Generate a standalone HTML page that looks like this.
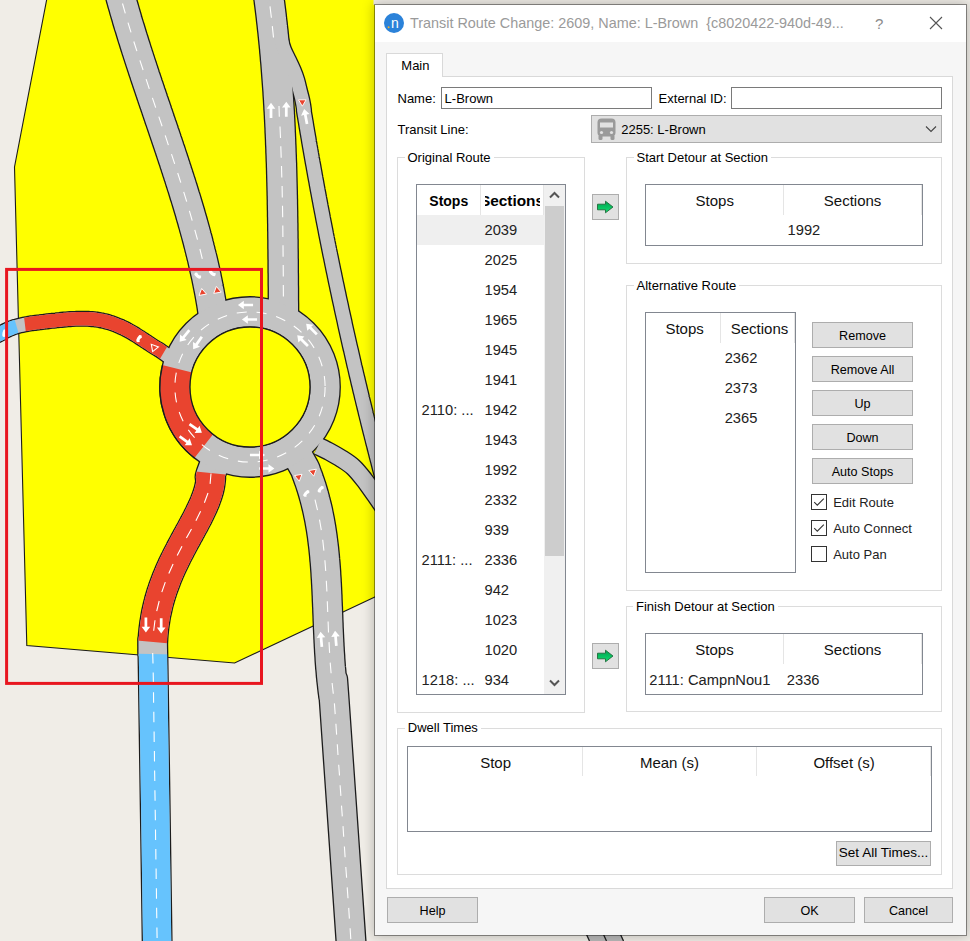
<!DOCTYPE html>
<html><head><meta charset="utf-8">
<style>
*{margin:0;padding:0;box-sizing:border-box}
html,body{width:970px;height:941px;overflow:hidden;background:#f0ede7;font-family:"Liberation Sans",sans-serif}
.a{position:absolute}
.t{position:absolute;white-space:nowrap;color:#000}
.tb{position:absolute;white-space:nowrap;background:#fff;padding:0 3px}
</style></head><body>
<svg class="a" style="left:0;top:0" width="970" height="941" viewBox="0 0 970 941">
<rect width="970" height="941" fill="#f0ede7"/>
<polygon points="46.8,-1 373.5,-1 373.5,5 420,5 420,575.7 234.6,663 26.8,645.6 14.5,167" fill="#ffff00"/>
<polyline points="46.8,-1 14.5,167 26.8,645.6 234.6,663 420,575.7" fill="none" stroke="#1c1c1c" stroke-width="1.1"/>
<g fill="none" stroke-linecap="butt" stroke-linejoin="round">
<path d="M116.2,-20.0 C116.4,-19.3 116.9,-17.3 117.2,-16.0 C117.6,-14.7 117.9,-13.3 118.3,-12.0 C118.6,-10.7 119.0,-9.3 119.3,-8.0 C119.7,-6.7 120.0,-5.3 120.4,-4.0 C120.8,-2.7 121.1,-1.3 121.5,0.0 C121.9,1.3 122.2,2.7 122.6,4.0 C123.0,5.3 123.4,6.7 123.8,8.0 C124.1,9.3 124.5,10.7 124.9,12.0 C125.3,13.3 125.7,14.7 126.1,16.0 C126.5,17.3 126.9,18.7 127.2,20.0 C127.6,21.3 128.0,22.7 128.4,24.0 C128.8,25.3 129.2,26.7 129.7,28.0 C130.1,29.3 130.5,30.7 130.9,32.0 C131.3,33.3 131.7,34.7 132.1,36.0 C132.5,37.3 132.9,38.7 133.4,40.0 C133.8,41.3 134.2,42.7 134.6,44.0 C135.0,45.3 135.5,46.7 135.9,48.0 C136.3,49.3 136.7,50.7 137.2,52.0 C137.6,53.3 138.0,54.7 138.5,56.0 C138.9,57.3 139.3,58.7 139.8,60.0 C140.2,61.3 140.6,62.7 141.1,64.0 C141.5,65.3 142.0,66.7 142.4,68.0 C142.8,69.3 143.3,70.7 143.7,72.0 C144.2,73.3 144.6,74.7 145.0,76.0 C145.5,77.3 145.9,78.7 146.4,80.0 C146.8,81.3 147.3,82.7 147.7,84.0 C148.2,85.3 148.6,86.7 149.1,88.0 C149.5,89.3 150.0,90.7 150.4,92.0 C150.9,93.3 151.3,94.7 151.8,96.0 C152.2,97.3 152.7,98.7 153.1,100.0 C153.6,101.3 154.0,102.7 154.5,104.0 C155.0,105.3 155.4,106.7 155.9,108.0 C156.3,109.3 156.8,110.7 157.2,112.0 C157.7,113.3 158.1,114.7 158.6,116.0 C159.0,117.3 159.5,118.7 159.9,120.0 C160.4,121.3 160.9,122.7 161.3,124.0 C161.8,125.3 162.2,126.7 162.7,128.0 C163.1,129.3 163.6,130.7 164.0,132.0 C164.5,133.3 164.9,134.7 165.4,136.0 C165.8,137.3 166.3,138.7 166.7,140.0 C167.2,141.3 167.6,142.7 168.1,144.0 C168.5,145.3 169.0,146.7 169.4,148.0 C169.9,149.3 170.3,150.7 170.8,152.0 C171.2,153.3 171.6,154.7 172.1,156.0 C172.5,157.3 173.0,158.7 173.4,160.0 C173.9,161.3 174.3,162.7 174.7,164.0 C175.2,165.3 175.6,166.7 176.0,168.0 C176.5,169.3 176.9,170.7 177.3,172.0 C177.8,173.3 178.2,174.7 178.6,176.0 C179.1,177.3 179.5,178.7 179.9,180.0 C180.3,181.3 180.8,182.7 181.2,184.0 C181.6,185.3 182.0,186.7 182.5,188.0 C182.9,189.3 183.3,190.7 183.7,192.0 C184.1,193.3 184.5,194.7 184.9,196.0 C185.4,197.3 185.8,198.7 186.2,200.0 C186.6,201.3 187.0,202.7 187.4,204.0 C187.8,205.3 188.2,206.7 188.6,208.0 C189.0,209.3 189.4,210.7 189.8,212.0 C190.2,213.3 190.5,214.7 190.9,216.0 C191.3,217.3 191.7,218.7 192.1,220.0 C192.5,221.3 192.8,222.7 193.2,224.0 C193.6,225.3 194.0,226.7 194.3,228.0 C194.7,229.3 195.1,230.7 195.4,232.0 C195.8,233.3 196.2,234.7 196.5,236.0 C196.9,237.3 197.2,238.7 197.6,240.0 C197.9,241.3 198.3,242.7 198.6,244.0 C199.0,245.3 199.3,246.7 199.6,248.0 C200.0,249.3 200.3,250.7 200.6,252.0 C201.0,253.3 201.3,254.7 201.6,256.0 C202.0,257.3 202.3,258.7 202.6,260.0 C202.9,261.3 203.2,262.7 203.5,264.0 C203.8,265.3 204.1,266.7 204.4,268.0 C204.7,269.3 205.0,270.7 205.3,272.0 C205.6,273.3 205.9,274.7 206.2,276.0 C206.5,277.3 206.7,278.7 207.0,280.0 C207.3,281.3 207.6,282.7 207.8,284.0 C208.1,285.3 208.4,286.7 208.6,288.0 C208.9,289.3 209.1,290.7 209.4,292.0 C209.6,293.3 209.9,294.7 210.1,296.0 C210.3,297.3 210.6,298.7 210.8,300.0 C211.0,301.3 211.3,302.7 211.5,304.0 C211.7,305.3 211.9,306.7 212.1,308.0 C212.3,309.3 212.5,310.7 212.7,312.0 C212.9,313.3 213.1,314.7 213.3,316.0 C213.5,317.3 213.8,319.3 213.9,320.0" stroke="#1c1c1c" stroke-width="31.1"/>
<path d="M266.4,-20.0 C266.5,-19.3 266.8,-17.3 267.0,-16.0 C267.2,-14.7 267.3,-13.3 267.5,-12.0 C267.7,-10.7 267.9,-9.3 268.1,-8.0 C268.3,-6.7 268.5,-5.3 268.6,-4.0 C268.8,-2.7 269.0,-1.3 269.2,0.0 C269.3,1.3 269.5,2.7 269.7,4.0 C269.9,5.3 270.0,6.7 270.2,8.0 C270.4,9.3 270.5,10.7 270.7,12.0 C270.9,13.3 271.0,14.7 271.2,16.0 C271.3,17.3 271.5,18.7 271.6,20.0 C271.8,21.3 271.9,22.7 272.1,24.0 C272.2,25.3 272.4,26.7 272.5,28.0 C272.7,29.3 272.8,30.7 273.0,32.0 C273.1,33.3 273.2,34.7 273.4,36.0 C273.5,37.3 273.6,38.7 273.8,40.0 C273.9,41.3 274.0,42.7 274.2,44.0 C274.3,45.3 274.4,46.7 274.6,48.0 C274.7,49.3 274.8,50.7 274.9,52.0 C275.1,53.3 275.2,54.7 275.3,56.0 C275.4,57.3 275.5,58.7 275.6,60.0 C275.8,61.3 275.9,62.7 276.0,64.0 C276.1,65.3 276.2,66.7 276.3,68.0 C276.4,69.3 276.5,70.7 276.6,72.0 C276.7,73.3 276.8,74.7 276.9,76.0 C277.0,77.3 277.1,78.7 277.2,80.0 C277.3,81.3 277.4,82.7 277.5,84.0 C277.6,85.3 277.7,86.7 277.8,88.0 C277.9,89.3 278.0,90.7 278.1,92.0 C278.1,93.3 278.2,94.7 278.3,96.0 C278.4,97.3 278.5,98.7 278.6,100.0 C278.6,101.3 278.7,102.7 278.8,104.0 C278.9,105.3 279.0,106.7 279.0,108.0 C279.1,109.3 279.2,110.7 279.3,112.0 C279.3,113.3 279.4,114.7 279.5,116.0 C279.5,117.3 279.6,118.7 279.7,120.0 C279.7,121.3 279.8,122.7 279.9,124.0 C279.9,125.3 280.0,126.7 280.1,128.0 C280.1,129.3 280.2,130.7 280.2,132.0 C280.3,133.3 280.4,134.7 280.4,136.0 C280.5,137.3 280.5,138.7 280.6,140.0 C280.6,141.3 280.7,142.7 280.7,144.0 C280.8,145.3 280.9,146.7 280.9,148.0 C281.0,149.3 281.0,150.7 281.0,152.0 C281.1,153.3 281.1,154.7 281.2,156.0 C281.2,157.3 281.3,158.7 281.3,160.0 C281.4,161.3 281.4,162.7 281.5,164.0 C281.5,165.3 281.5,166.7 281.6,168.0 C281.6,169.3 281.7,170.7 281.7,172.0 C281.7,173.3 281.8,174.7 281.8,176.0 C281.8,177.3 281.9,178.7 281.9,180.0 C281.9,181.3 282.0,182.7 282.0,184.0 C282.0,185.3 282.1,186.7 282.1,188.0 C282.1,189.3 282.2,190.7 282.2,192.0 C282.2,193.3 282.2,194.7 282.3,196.0 C282.3,197.3 282.3,198.7 282.4,200.0 C282.4,201.3 282.4,202.7 282.4,204.0 C282.5,205.3 282.5,206.7 282.5,208.0 C282.5,209.3 282.6,210.7 282.6,212.0 C282.6,213.3 282.6,214.7 282.6,216.0 C282.7,217.3 282.7,218.7 282.7,220.0 C282.7,221.3 282.7,222.7 282.8,224.0 C282.8,225.3 282.8,226.7 282.8,228.0 C282.8,229.3 282.8,230.7 282.9,232.0 C282.9,233.3 282.9,234.7 282.9,236.0 C282.9,237.3 282.9,238.7 283.0,240.0 C283.0,241.3 283.0,242.7 283.0,244.0 C283.0,245.3 283.0,246.7 283.0,248.0 C283.1,249.3 283.1,250.7 283.1,252.0 C283.1,253.3 283.1,254.7 283.1,256.0 C283.1,257.3 283.1,258.7 283.2,260.0 C283.2,261.3 283.2,262.7 283.2,264.0 C283.2,265.3 283.2,266.7 283.2,268.0 C283.2,269.3 283.2,270.7 283.2,272.0 C283.3,273.3 283.3,274.7 283.3,276.0 C283.3,277.3 283.3,278.7 283.3,280.0 C283.3,281.3 283.3,282.7 283.3,284.0 C283.3,285.3 283.4,286.7 283.4,288.0 C283.4,289.3 283.4,290.7 283.4,292.0 C283.4,293.3 283.4,294.7 283.4,296.0 C283.4,297.3 283.4,298.7 283.4,300.0 C283.5,301.3 283.5,302.7 283.5,304.0 C283.5,305.3 283.5,306.7 283.5,308.0 C283.5,309.3 283.5,310.7 283.5,312.0 C283.5,313.3 283.6,314.7 283.6,316.0 C283.6,317.3 283.6,319.3 283.6,320.0" stroke="#1c1c1c" stroke-width="31.6"/>
<path d="M274.0,0.0 C274.5,3.3 276.1,15.0 277.0,20.0 C277.9,25.0 278.8,26.7 279.5,30.0 C280.2,33.3 280.4,36.7 281.2,40.0 C282.0,43.3 282.9,46.7 284.2,50.0 C285.5,53.3 287.4,56.7 289.0,60.0 C290.6,63.3 292.2,66.7 293.6,70.0 C295.0,73.3 296.3,76.7 297.3,80.0 C298.3,83.3 299.0,86.7 299.8,90.0 C300.6,93.3 301.6,96.7 302.3,100.0 C303.0,103.3 303.8,108.3 304.0,110.0 C304.2,111.7 303.7,109.3 303.8,110.0 C303.8,110.7 304.2,112.7 304.4,114.0 C304.6,115.3 304.9,116.7 305.1,118.0 C305.3,119.3 305.5,120.7 305.8,122.0 C306.0,123.3 306.2,124.7 306.4,126.0 C306.6,127.3 306.9,128.7 307.1,130.0 C307.3,131.3 307.5,132.7 307.8,134.0 C308.0,135.3 308.2,136.7 308.5,138.0 C308.7,139.3 308.9,140.7 309.1,142.0 C309.4,143.3 309.6,144.7 309.8,146.0 C310.1,147.3 310.3,148.7 310.5,150.0 C310.8,151.3 311.0,152.7 311.2,154.0 C311.5,155.3 311.7,156.7 311.9,158.0 C312.2,159.3 312.4,160.7 312.6,162.0 C312.9,163.3 313.1,164.7 313.4,166.0 C313.6,167.3 313.8,168.7 314.1,170.0 C314.3,171.3 314.6,172.7 314.8,174.0 C315.0,175.3 315.3,176.7 315.5,178.0 C315.8,179.3 316.0,180.7 316.3,182.0 C316.5,183.3 316.7,184.7 317.0,186.0 C317.2,187.3 317.5,188.7 317.7,190.0 C318.0,191.3 318.2,192.7 318.5,194.0 C318.7,195.3 319.0,196.7 319.2,198.0 C319.5,199.3 319.7,200.7 320.0,202.0 C320.2,203.3 320.5,204.7 320.7,206.0 C321.0,207.3 321.2,208.7 321.5,210.0 C321.7,211.3 322.0,212.7 322.3,214.0 C322.5,215.3 322.8,216.7 323.0,218.0 C323.3,219.3 323.5,220.7 323.8,222.0 C324.1,223.3 324.3,224.7 324.6,226.0 C324.8,227.3 325.1,228.7 325.4,230.0 C325.6,231.3 325.9,232.7 326.1,234.0 C326.4,235.3 326.7,236.7 326.9,238.0 C327.2,239.3 327.5,240.7 327.7,242.0 C328.0,243.3 328.3,244.7 328.5,246.0 C328.8,247.3 329.1,248.7 329.3,250.0 C329.6,251.3 329.9,252.7 330.1,254.0 C330.4,255.3 330.7,256.7 331.0,258.0 C331.2,259.3 331.5,260.7 331.8,262.0 C332.0,263.3 332.3,264.7 332.6,266.0 C332.9,267.3 333.1,268.7 333.4,270.0 C333.7,271.3 334.0,272.7 334.3,274.0 C334.5,275.3 334.8,276.7 335.1,278.0 C335.4,279.3 335.6,280.7 335.9,282.0 C336.2,283.3 336.5,284.7 336.8,286.0 C337.1,287.3 337.3,288.7 337.6,290.0 C337.9,291.3 338.2,292.7 338.5,294.0 C338.8,295.3 339.0,296.7 339.3,298.0 C339.6,299.3 339.9,300.7 340.2,302.0 C340.5,303.3 340.8,304.7 341.1,306.0 C341.3,307.3 341.6,308.7 341.9,310.0 C342.2,311.3 342.5,312.7 342.8,314.0 C343.1,315.3 343.4,316.7 343.7,318.0 C344.0,319.3 344.3,320.7 344.6,322.0 C344.8,323.3 345.1,324.7 345.4,326.0 C345.7,327.3 346.0,328.7 346.3,330.0 C346.6,331.3 346.9,332.7 347.2,334.0 C347.5,335.3 347.8,336.7 348.1,338.0 C348.4,339.3 348.7,340.7 349.0,342.0 C349.3,343.3 349.6,344.7 349.9,346.0 C350.2,347.3 350.5,348.7 350.9,350.0 C351.2,351.3 351.5,352.7 351.8,354.0 C352.1,355.3 352.4,356.7 352.7,358.0 C353.0,359.3 353.3,360.7 353.6,362.0 C353.9,363.3 354.2,364.7 354.5,366.0 C354.9,367.3 355.2,368.7 355.5,370.0 C355.8,371.3 356.1,372.7 356.4,374.0 C356.7,375.3 357.0,376.7 357.4,378.0 C357.7,379.3 358.0,380.7 358.3,382.0 C358.6,383.3 358.9,384.7 359.3,386.0 C359.6,387.3 359.9,388.7 360.2,390.0 C360.5,391.3 360.9,392.7 361.2,394.0 C361.5,395.3 361.8,396.7 362.1,398.0 C362.5,399.3 362.8,400.7 363.1,402.0 C363.4,403.3 363.8,404.7 364.1,406.0 C364.4,407.3 364.7,408.7 365.1,410.0 C365.4,411.3 365.7,412.7 366.0,414.0 C366.4,415.3 366.7,416.7 367.0,418.0 C367.4,419.3 367.7,420.7 368.0,422.0 C368.3,423.3 368.7,424.7 369.0,426.0 C369.3,427.3 369.7,428.7 370.0,430.0 C370.3,431.3 370.7,432.7 371.0,434.0 C371.4,435.3 371.7,436.7 372.0,438.0 C372.4,439.3 372.7,440.7 373.0,442.0 C373.4,443.3 373.7,444.7 374.1,446.0 C374.4,447.3 374.7,448.7 375.1,450.0 C375.4,451.3 375.8,452.7 376.1,454.0 C376.4,455.3 376.8,456.7 377.1,458.0 C377.5,459.3 377.8,460.7 378.2,462.0 C378.5,463.3 378.9,464.7 379.2,466.0 C379.5,467.3 379.9,468.7 380.2,470.0 C380.6,471.3 380.9,472.7 381.3,474.0 C381.6,475.3 382.0,476.7 382.3,478.0 C382.7,479.3 383.0,480.7 383.4,482.0 C383.8,483.3 384.1,484.7 384.5,486.0 C384.8,487.3 385.2,488.7 385.5,490.0 C385.9,491.3 386.2,492.7 386.6,494.0 C386.9,495.3 387.3,496.7 387.7,498.0 C388.0,499.3 388.4,500.7 388.7,502.0 C389.1,503.3 389.5,504.7 389.8,506.0 C390.2,507.3 390.5,508.7 390.9,510.0 C391.3,511.3 391.6,512.7 392.0,514.0 C392.4,515.3 392.9,517.3 393.1,518.0" stroke="#1c1c1c" stroke-width="16.1"/>
<path d="M-20.0,343.0 C-16.7,341.5 -4.0,336.0 0.0,334.1 C4.0,332.2 2.7,332.4 4.0,331.6 C5.3,330.8 6.7,330.2 8.0,329.6 C9.3,328.9 10.7,328.4 12.0,327.9 C13.3,327.4 14.7,327.0 16.0,326.6 C17.3,326.2 18.7,325.8 20.0,325.5 C21.3,325.2 22.7,324.9 24.0,324.6 C25.3,324.3 26.7,324.1 28.0,323.9 C29.3,323.6 30.7,323.4 32.0,323.2 C33.3,323.0 34.7,322.9 36.0,322.7 C37.3,322.5 38.7,322.3 40.0,322.2 C41.3,322.0 42.7,321.8 44.0,321.7 C45.3,321.5 46.7,321.4 48.0,321.2 C49.3,321.1 50.7,320.9 52.0,320.8 C53.3,320.6 54.7,320.5 56.0,320.4 C57.3,320.2 58.7,320.1 60.0,320.0 C61.3,319.8 62.7,319.7 64.0,319.6 C65.3,319.5 66.7,319.4 68.0,319.3 C69.3,319.2 70.7,319.1 72.0,319.0 C73.3,318.9 74.7,318.8 76.0,318.8 C77.3,318.7 78.7,318.7 80.0,318.7 C81.3,318.7 82.7,318.7 84.0,318.7 C85.3,318.7 86.7,318.7 88.0,318.8 C89.3,318.9 90.7,319.0 92.0,319.1 C93.3,319.2 94.7,319.4 96.0,319.5 C97.3,319.7 98.7,319.9 100.0,320.2 C101.3,320.4 102.7,320.7 104.0,321.0 C105.3,321.3 106.7,321.6 108.0,322.0 C109.3,322.4 110.7,322.8 112.0,323.2 C113.3,323.7 114.7,324.2 116.0,324.7 C117.3,325.2 118.7,325.8 120.0,326.4 C121.3,327.0 122.7,327.6 124.0,328.2 C125.3,328.9 126.7,329.6 128.0,330.3 C129.3,331.1 130.7,331.8 132.0,332.6 C133.3,333.4 134.7,334.2 136.0,335.0 C137.3,335.8 138.7,336.7 140.0,337.6 C141.3,338.4 142.7,339.3 144.0,340.2 C145.3,341.1 146.7,341.9 148.0,342.8 C149.3,343.7 150.7,344.6 152.0,345.5 C153.3,346.3 154.7,347.2 156.0,348.0 C157.3,348.8 157.7,348.7 160.0,350.3 C162.3,351.9 166.3,354.9 170.0,357.5 C173.7,360.1 180.0,364.6 182.0,366.0" stroke="#1c1c1c" stroke-width="16.1"/>
<path d="M222.0,445.0 C220.1,449.8 212.6,468.5 210.8,474.0 C208.9,479.5 210.8,476.7 210.8,478.0 C210.7,479.3 210.6,480.7 210.4,482.0 C210.3,483.3 210.0,484.7 209.8,486.0 C209.5,487.3 209.2,488.7 208.9,490.0 C208.5,491.3 208.1,492.7 207.7,494.0 C207.3,495.3 206.8,496.7 206.3,498.0 C205.8,499.3 205.3,500.7 204.8,502.0 C204.2,503.3 203.7,504.7 203.1,506.0 C202.5,507.3 201.9,508.7 201.2,510.0 C200.6,511.3 200.0,512.7 199.3,514.0 C198.6,515.3 198.0,516.7 197.3,518.0 C196.6,519.3 195.9,520.7 195.2,522.0 C194.5,523.3 193.8,524.7 193.0,526.0 C192.3,527.3 191.6,528.7 190.9,530.0 C190.1,531.3 189.4,532.7 188.7,534.0 C187.9,535.3 187.2,536.7 186.5,538.0 C185.8,539.3 185.0,540.7 184.3,542.0 C183.6,543.3 182.9,544.7 182.2,546.0 C181.5,547.3 180.7,548.7 180.1,550.0 C179.4,551.3 178.7,552.7 178.0,554.0 C177.3,555.3 176.6,556.7 176.0,558.0 C175.3,559.3 174.7,560.7 174.0,562.0 C173.4,563.3 172.7,564.7 172.1,566.0 C171.5,567.3 170.9,568.7 170.3,570.0 C169.7,571.3 169.1,572.7 168.6,574.0 C168.0,575.3 167.5,576.7 166.9,578.0 C166.4,579.3 165.9,580.7 165.4,582.0 C164.9,583.3 164.4,584.7 163.9,586.0 C163.4,587.3 162.9,588.7 162.5,590.0 C162.1,591.3 161.6,592.7 161.2,594.0 C160.8,595.3 160.4,596.7 160.0,598.0 C159.6,599.3 159.2,600.7 158.9,602.0 C158.5,603.3 158.2,604.7 157.9,606.0 C157.6,607.3 157.3,608.7 157.0,610.0 C156.7,611.3 156.4,612.7 156.1,614.0 C155.9,615.3 155.6,616.7 155.4,618.0 C155.2,619.3 155.0,620.7 154.8,622.0 C154.5,623.3 154.4,624.7 154.2,626.0 C154.0,627.3 153.9,628.7 153.7,630.0 C153.6,631.3 153.5,632.7 153.3,634.0 C153.2,635.3 153.1,636.7 153.0,638.0 C153.0,639.3 152.9,640.7 152.8,642.0 C152.8,643.3 152.7,644.7 152.7,646.0 C152.7,647.3 152.6,648.7 152.6,650.0 C152.6,651.3 152.6,651.5 152.7,654.0 C152.7,656.5 152.3,614.0 153.1,665.0 C153.9,716.0 156.7,910.8 157.4,960.0" stroke="#1c1c1c" stroke-width="30.900000000000002"/>
<path d="M292.0,446.0 C294.1,449.7 302.1,463.7 304.5,468.0 C306.8,472.3 305.6,470.7 306.1,472.0 C306.6,473.3 307.1,474.7 307.6,476.0 C308.1,477.3 308.6,478.7 309.0,480.0 C309.5,481.3 310.0,482.7 310.4,484.0 C310.8,485.3 311.3,486.7 311.7,488.0 C312.1,489.3 312.5,490.7 312.9,492.0 C313.3,493.3 313.7,494.7 314.0,496.0 C314.4,497.3 314.8,498.7 315.1,500.0 C315.5,501.3 315.8,502.7 316.1,504.0 C316.4,505.3 316.8,506.7 317.1,508.0 C317.4,509.3 317.7,510.7 318.0,512.0 C318.2,513.3 318.5,514.7 318.8,516.0 C319.1,517.3 319.3,518.7 319.6,520.0 C319.8,521.3 320.0,522.7 320.3,524.0 C320.5,525.3 320.7,526.7 321.0,528.0 C321.2,529.3 321.4,530.7 321.6,532.0 C321.8,533.3 322.0,534.7 322.2,536.0 C322.4,537.3 322.5,538.7 322.7,540.0 C322.9,541.3 323.0,542.7 323.2,544.0 C323.4,545.3 323.5,546.7 323.7,548.0 C323.8,549.3 324.0,550.7 324.1,552.0 C324.2,553.3 324.4,554.7 324.5,556.0 C324.6,557.3 324.7,558.7 324.8,560.0 C325.0,561.3 325.1,562.7 325.2,564.0 C325.3,565.3 325.4,566.7 325.5,568.0 C325.6,569.3 325.7,570.7 325.8,572.0 C325.9,573.3 325.9,574.7 326.0,576.0 C326.1,577.3 326.2,578.7 326.3,580.0 C326.3,581.3 326.4,582.7 326.5,584.0 C326.6,585.3 326.6,586.7 326.7,588.0 C326.8,589.3 326.8,590.7 326.9,592.0 C326.9,593.3 327.0,594.7 327.1,596.0 C327.1,597.3 327.2,598.7 327.2,600.0 C327.3,601.3 327.3,602.7 327.4,604.0 C327.4,605.3 327.5,606.7 327.6,608.0 C327.6,609.3 327.7,610.7 327.7,612.0 C327.8,613.3 327.8,614.7 327.9,616.0 C327.9,617.3 328.0,618.7 328.0,620.0 C328.1,621.3 328.1,622.7 328.2,624.0 C328.2,625.3 328.3,626.7 328.3,628.0 C328.4,629.3 328.5,630.7 328.5,632.0 C328.6,633.3 328.6,634.7 328.7,636.0 C328.7,637.3 328.8,638.7 328.9,640.0 C328.9,641.3 329.0,642.7 329.1,644.0 C329.1,645.3 329.2,646.7 329.3,648.0 C329.4,649.3 329.4,650.7 329.5,652.0 C329.6,653.3 329.7,654.7 329.8,656.0 C329.9,657.3 329.9,658.7 330.0,660.0 C330.1,661.3 330.2,662.7 330.3,664.0 C330.4,665.3 330.5,666.7 330.6,668.0 C330.8,669.3 330.9,670.7 331.0,672.0 C331.1,673.3 331.2,674.7 331.3,676.0 C331.5,677.3 331.6,678.7 331.7,680.0 C331.9,681.3 332.0,682.7 332.2,684.0 C332.3,685.3 332.5,686.7 332.6,688.0 C332.8,689.3 332.9,690.7 333.1,692.0 C333.3,693.3 333.5,694.7 333.6,696.0 C333.8,697.3 331.1,656.0 334.2,700.0 C337.3,744.0 349.3,916.7 352.3,960.0" stroke="#1c1c1c" stroke-width="31.1"/>
<path d="M318.0,446.0 C320.0,447.0 326.0,449.8 330.0,452.0 C334.0,454.2 338.1,456.5 342.0,459.0 C345.9,461.5 349.7,463.8 353.4,467.2 C357.1,470.6 360.5,475.0 364.0,479.5 C367.5,484.0 371.0,489.1 374.5,494.0 C378.0,498.9 383.2,506.5 385.0,509.0" stroke="#1c1c1c" stroke-width="19.1"/>
<circle cx="250" cy="387" r="75.1" stroke="#1c1c1c" stroke-width="31.599999999999994"/>
<path d="M116.2,-20.0 C116.4,-19.3 116.9,-17.3 117.2,-16.0 C117.6,-14.7 117.9,-13.3 118.3,-12.0 C118.6,-10.7 119.0,-9.3 119.3,-8.0 C119.7,-6.7 120.0,-5.3 120.4,-4.0 C120.8,-2.7 121.1,-1.3 121.5,0.0 C121.9,1.3 122.2,2.7 122.6,4.0 C123.0,5.3 123.4,6.7 123.8,8.0 C124.1,9.3 124.5,10.7 124.9,12.0 C125.3,13.3 125.7,14.7 126.1,16.0 C126.5,17.3 126.9,18.7 127.2,20.0 C127.6,21.3 128.0,22.7 128.4,24.0 C128.8,25.3 129.2,26.7 129.7,28.0 C130.1,29.3 130.5,30.7 130.9,32.0 C131.3,33.3 131.7,34.7 132.1,36.0 C132.5,37.3 132.9,38.7 133.4,40.0 C133.8,41.3 134.2,42.7 134.6,44.0 C135.0,45.3 135.5,46.7 135.9,48.0 C136.3,49.3 136.7,50.7 137.2,52.0 C137.6,53.3 138.0,54.7 138.5,56.0 C138.9,57.3 139.3,58.7 139.8,60.0 C140.2,61.3 140.6,62.7 141.1,64.0 C141.5,65.3 142.0,66.7 142.4,68.0 C142.8,69.3 143.3,70.7 143.7,72.0 C144.2,73.3 144.6,74.7 145.0,76.0 C145.5,77.3 145.9,78.7 146.4,80.0 C146.8,81.3 147.3,82.7 147.7,84.0 C148.2,85.3 148.6,86.7 149.1,88.0 C149.5,89.3 150.0,90.7 150.4,92.0 C150.9,93.3 151.3,94.7 151.8,96.0 C152.2,97.3 152.7,98.7 153.1,100.0 C153.6,101.3 154.0,102.7 154.5,104.0 C155.0,105.3 155.4,106.7 155.9,108.0 C156.3,109.3 156.8,110.7 157.2,112.0 C157.7,113.3 158.1,114.7 158.6,116.0 C159.0,117.3 159.5,118.7 159.9,120.0 C160.4,121.3 160.9,122.7 161.3,124.0 C161.8,125.3 162.2,126.7 162.7,128.0 C163.1,129.3 163.6,130.7 164.0,132.0 C164.5,133.3 164.9,134.7 165.4,136.0 C165.8,137.3 166.3,138.7 166.7,140.0 C167.2,141.3 167.6,142.7 168.1,144.0 C168.5,145.3 169.0,146.7 169.4,148.0 C169.9,149.3 170.3,150.7 170.8,152.0 C171.2,153.3 171.6,154.7 172.1,156.0 C172.5,157.3 173.0,158.7 173.4,160.0 C173.9,161.3 174.3,162.7 174.7,164.0 C175.2,165.3 175.6,166.7 176.0,168.0 C176.5,169.3 176.9,170.7 177.3,172.0 C177.8,173.3 178.2,174.7 178.6,176.0 C179.1,177.3 179.5,178.7 179.9,180.0 C180.3,181.3 180.8,182.7 181.2,184.0 C181.6,185.3 182.0,186.7 182.5,188.0 C182.9,189.3 183.3,190.7 183.7,192.0 C184.1,193.3 184.5,194.7 184.9,196.0 C185.4,197.3 185.8,198.7 186.2,200.0 C186.6,201.3 187.0,202.7 187.4,204.0 C187.8,205.3 188.2,206.7 188.6,208.0 C189.0,209.3 189.4,210.7 189.8,212.0 C190.2,213.3 190.5,214.7 190.9,216.0 C191.3,217.3 191.7,218.7 192.1,220.0 C192.5,221.3 192.8,222.7 193.2,224.0 C193.6,225.3 194.0,226.7 194.3,228.0 C194.7,229.3 195.1,230.7 195.4,232.0 C195.8,233.3 196.2,234.7 196.5,236.0 C196.9,237.3 197.2,238.7 197.6,240.0 C197.9,241.3 198.3,242.7 198.6,244.0 C199.0,245.3 199.3,246.7 199.6,248.0 C200.0,249.3 200.3,250.7 200.6,252.0 C201.0,253.3 201.3,254.7 201.6,256.0 C202.0,257.3 202.3,258.7 202.6,260.0 C202.9,261.3 203.2,262.7 203.5,264.0 C203.8,265.3 204.1,266.7 204.4,268.0 C204.7,269.3 205.0,270.7 205.3,272.0 C205.6,273.3 205.9,274.7 206.2,276.0 C206.5,277.3 206.7,278.7 207.0,280.0 C207.3,281.3 207.6,282.7 207.8,284.0 C208.1,285.3 208.4,286.7 208.6,288.0 C208.9,289.3 209.1,290.7 209.4,292.0 C209.6,293.3 209.9,294.7 210.1,296.0 C210.3,297.3 210.6,298.7 210.8,300.0 C211.0,301.3 211.3,302.7 211.5,304.0 C211.7,305.3 211.9,306.7 212.1,308.0 C212.3,309.3 212.5,310.7 212.7,312.0 C212.9,313.3 213.1,314.7 213.3,316.0 C213.5,317.3 213.8,319.3 213.9,320.0" stroke="#c3c3c3" stroke-width="28.5"/>
<path d="M266.4,-20.0 C266.5,-19.3 266.8,-17.3 267.0,-16.0 C267.2,-14.7 267.3,-13.3 267.5,-12.0 C267.7,-10.7 267.9,-9.3 268.1,-8.0 C268.3,-6.7 268.5,-5.3 268.6,-4.0 C268.8,-2.7 269.0,-1.3 269.2,0.0 C269.3,1.3 269.5,2.7 269.7,4.0 C269.9,5.3 270.0,6.7 270.2,8.0 C270.4,9.3 270.5,10.7 270.7,12.0 C270.9,13.3 271.0,14.7 271.2,16.0 C271.3,17.3 271.5,18.7 271.6,20.0 C271.8,21.3 271.9,22.7 272.1,24.0 C272.2,25.3 272.4,26.7 272.5,28.0 C272.7,29.3 272.8,30.7 273.0,32.0 C273.1,33.3 273.2,34.7 273.4,36.0 C273.5,37.3 273.6,38.7 273.8,40.0 C273.9,41.3 274.0,42.7 274.2,44.0 C274.3,45.3 274.4,46.7 274.6,48.0 C274.7,49.3 274.8,50.7 274.9,52.0 C275.1,53.3 275.2,54.7 275.3,56.0 C275.4,57.3 275.5,58.7 275.6,60.0 C275.8,61.3 275.9,62.7 276.0,64.0 C276.1,65.3 276.2,66.7 276.3,68.0 C276.4,69.3 276.5,70.7 276.6,72.0 C276.7,73.3 276.8,74.7 276.9,76.0 C277.0,77.3 277.1,78.7 277.2,80.0 C277.3,81.3 277.4,82.7 277.5,84.0 C277.6,85.3 277.7,86.7 277.8,88.0 C277.9,89.3 278.0,90.7 278.1,92.0 C278.1,93.3 278.2,94.7 278.3,96.0 C278.4,97.3 278.5,98.7 278.6,100.0 C278.6,101.3 278.7,102.7 278.8,104.0 C278.9,105.3 279.0,106.7 279.0,108.0 C279.1,109.3 279.2,110.7 279.3,112.0 C279.3,113.3 279.4,114.7 279.5,116.0 C279.5,117.3 279.6,118.7 279.7,120.0 C279.7,121.3 279.8,122.7 279.9,124.0 C279.9,125.3 280.0,126.7 280.1,128.0 C280.1,129.3 280.2,130.7 280.2,132.0 C280.3,133.3 280.4,134.7 280.4,136.0 C280.5,137.3 280.5,138.7 280.6,140.0 C280.6,141.3 280.7,142.7 280.7,144.0 C280.8,145.3 280.9,146.7 280.9,148.0 C281.0,149.3 281.0,150.7 281.0,152.0 C281.1,153.3 281.1,154.7 281.2,156.0 C281.2,157.3 281.3,158.7 281.3,160.0 C281.4,161.3 281.4,162.7 281.5,164.0 C281.5,165.3 281.5,166.7 281.6,168.0 C281.6,169.3 281.7,170.7 281.7,172.0 C281.7,173.3 281.8,174.7 281.8,176.0 C281.8,177.3 281.9,178.7 281.9,180.0 C281.9,181.3 282.0,182.7 282.0,184.0 C282.0,185.3 282.1,186.7 282.1,188.0 C282.1,189.3 282.2,190.7 282.2,192.0 C282.2,193.3 282.2,194.7 282.3,196.0 C282.3,197.3 282.3,198.7 282.4,200.0 C282.4,201.3 282.4,202.7 282.4,204.0 C282.5,205.3 282.5,206.7 282.5,208.0 C282.5,209.3 282.6,210.7 282.6,212.0 C282.6,213.3 282.6,214.7 282.6,216.0 C282.7,217.3 282.7,218.7 282.7,220.0 C282.7,221.3 282.7,222.7 282.8,224.0 C282.8,225.3 282.8,226.7 282.8,228.0 C282.8,229.3 282.8,230.7 282.9,232.0 C282.9,233.3 282.9,234.7 282.9,236.0 C282.9,237.3 282.9,238.7 283.0,240.0 C283.0,241.3 283.0,242.7 283.0,244.0 C283.0,245.3 283.0,246.7 283.0,248.0 C283.1,249.3 283.1,250.7 283.1,252.0 C283.1,253.3 283.1,254.7 283.1,256.0 C283.1,257.3 283.1,258.7 283.2,260.0 C283.2,261.3 283.2,262.7 283.2,264.0 C283.2,265.3 283.2,266.7 283.2,268.0 C283.2,269.3 283.2,270.7 283.2,272.0 C283.3,273.3 283.3,274.7 283.3,276.0 C283.3,277.3 283.3,278.7 283.3,280.0 C283.3,281.3 283.3,282.7 283.3,284.0 C283.3,285.3 283.4,286.7 283.4,288.0 C283.4,289.3 283.4,290.7 283.4,292.0 C283.4,293.3 283.4,294.7 283.4,296.0 C283.4,297.3 283.4,298.7 283.4,300.0 C283.5,301.3 283.5,302.7 283.5,304.0 C283.5,305.3 283.5,306.7 283.5,308.0 C283.5,309.3 283.5,310.7 283.5,312.0 C283.5,313.3 283.6,314.7 283.6,316.0 C283.6,317.3 283.6,319.3 283.6,320.0" stroke="#c3c3c3" stroke-width="29"/>
<path d="M274.0,0.0 C274.5,3.3 276.1,15.0 277.0,20.0 C277.9,25.0 278.8,26.7 279.5,30.0 C280.2,33.3 280.4,36.7 281.2,40.0 C282.0,43.3 282.9,46.7 284.2,50.0 C285.5,53.3 287.4,56.7 289.0,60.0 C290.6,63.3 292.2,66.7 293.6,70.0 C295.0,73.3 296.3,76.7 297.3,80.0 C298.3,83.3 299.0,86.7 299.8,90.0 C300.6,93.3 301.6,96.7 302.3,100.0 C303.0,103.3 303.8,108.3 304.0,110.0 C304.2,111.7 303.7,109.3 303.8,110.0 C303.8,110.7 304.2,112.7 304.4,114.0 C304.6,115.3 304.9,116.7 305.1,118.0 C305.3,119.3 305.5,120.7 305.8,122.0 C306.0,123.3 306.2,124.7 306.4,126.0 C306.6,127.3 306.9,128.7 307.1,130.0 C307.3,131.3 307.5,132.7 307.8,134.0 C308.0,135.3 308.2,136.7 308.5,138.0 C308.7,139.3 308.9,140.7 309.1,142.0 C309.4,143.3 309.6,144.7 309.8,146.0 C310.1,147.3 310.3,148.7 310.5,150.0 C310.8,151.3 311.0,152.7 311.2,154.0 C311.5,155.3 311.7,156.7 311.9,158.0 C312.2,159.3 312.4,160.7 312.6,162.0 C312.9,163.3 313.1,164.7 313.4,166.0 C313.6,167.3 313.8,168.7 314.1,170.0 C314.3,171.3 314.6,172.7 314.8,174.0 C315.0,175.3 315.3,176.7 315.5,178.0 C315.8,179.3 316.0,180.7 316.3,182.0 C316.5,183.3 316.7,184.7 317.0,186.0 C317.2,187.3 317.5,188.7 317.7,190.0 C318.0,191.3 318.2,192.7 318.5,194.0 C318.7,195.3 319.0,196.7 319.2,198.0 C319.5,199.3 319.7,200.7 320.0,202.0 C320.2,203.3 320.5,204.7 320.7,206.0 C321.0,207.3 321.2,208.7 321.5,210.0 C321.7,211.3 322.0,212.7 322.3,214.0 C322.5,215.3 322.8,216.7 323.0,218.0 C323.3,219.3 323.5,220.7 323.8,222.0 C324.1,223.3 324.3,224.7 324.6,226.0 C324.8,227.3 325.1,228.7 325.4,230.0 C325.6,231.3 325.9,232.7 326.1,234.0 C326.4,235.3 326.7,236.7 326.9,238.0 C327.2,239.3 327.5,240.7 327.7,242.0 C328.0,243.3 328.3,244.7 328.5,246.0 C328.8,247.3 329.1,248.7 329.3,250.0 C329.6,251.3 329.9,252.7 330.1,254.0 C330.4,255.3 330.7,256.7 331.0,258.0 C331.2,259.3 331.5,260.7 331.8,262.0 C332.0,263.3 332.3,264.7 332.6,266.0 C332.9,267.3 333.1,268.7 333.4,270.0 C333.7,271.3 334.0,272.7 334.3,274.0 C334.5,275.3 334.8,276.7 335.1,278.0 C335.4,279.3 335.6,280.7 335.9,282.0 C336.2,283.3 336.5,284.7 336.8,286.0 C337.1,287.3 337.3,288.7 337.6,290.0 C337.9,291.3 338.2,292.7 338.5,294.0 C338.8,295.3 339.0,296.7 339.3,298.0 C339.6,299.3 339.9,300.7 340.2,302.0 C340.5,303.3 340.8,304.7 341.1,306.0 C341.3,307.3 341.6,308.7 341.9,310.0 C342.2,311.3 342.5,312.7 342.8,314.0 C343.1,315.3 343.4,316.7 343.7,318.0 C344.0,319.3 344.3,320.7 344.6,322.0 C344.8,323.3 345.1,324.7 345.4,326.0 C345.7,327.3 346.0,328.7 346.3,330.0 C346.6,331.3 346.9,332.7 347.2,334.0 C347.5,335.3 347.8,336.7 348.1,338.0 C348.4,339.3 348.7,340.7 349.0,342.0 C349.3,343.3 349.6,344.7 349.9,346.0 C350.2,347.3 350.5,348.7 350.9,350.0 C351.2,351.3 351.5,352.7 351.8,354.0 C352.1,355.3 352.4,356.7 352.7,358.0 C353.0,359.3 353.3,360.7 353.6,362.0 C353.9,363.3 354.2,364.7 354.5,366.0 C354.9,367.3 355.2,368.7 355.5,370.0 C355.8,371.3 356.1,372.7 356.4,374.0 C356.7,375.3 357.0,376.7 357.4,378.0 C357.7,379.3 358.0,380.7 358.3,382.0 C358.6,383.3 358.9,384.7 359.3,386.0 C359.6,387.3 359.9,388.7 360.2,390.0 C360.5,391.3 360.9,392.7 361.2,394.0 C361.5,395.3 361.8,396.7 362.1,398.0 C362.5,399.3 362.8,400.7 363.1,402.0 C363.4,403.3 363.8,404.7 364.1,406.0 C364.4,407.3 364.7,408.7 365.1,410.0 C365.4,411.3 365.7,412.7 366.0,414.0 C366.4,415.3 366.7,416.7 367.0,418.0 C367.4,419.3 367.7,420.7 368.0,422.0 C368.3,423.3 368.7,424.7 369.0,426.0 C369.3,427.3 369.7,428.7 370.0,430.0 C370.3,431.3 370.7,432.7 371.0,434.0 C371.4,435.3 371.7,436.7 372.0,438.0 C372.4,439.3 372.7,440.7 373.0,442.0 C373.4,443.3 373.7,444.7 374.1,446.0 C374.4,447.3 374.7,448.7 375.1,450.0 C375.4,451.3 375.8,452.7 376.1,454.0 C376.4,455.3 376.8,456.7 377.1,458.0 C377.5,459.3 377.8,460.7 378.2,462.0 C378.5,463.3 378.9,464.7 379.2,466.0 C379.5,467.3 379.9,468.7 380.2,470.0 C380.6,471.3 380.9,472.7 381.3,474.0 C381.6,475.3 382.0,476.7 382.3,478.0 C382.7,479.3 383.0,480.7 383.4,482.0 C383.8,483.3 384.1,484.7 384.5,486.0 C384.8,487.3 385.2,488.7 385.5,490.0 C385.9,491.3 386.2,492.7 386.6,494.0 C386.9,495.3 387.3,496.7 387.7,498.0 C388.0,499.3 388.4,500.7 388.7,502.0 C389.1,503.3 389.5,504.7 389.8,506.0 C390.2,507.3 390.5,508.7 390.9,510.0 C391.3,511.3 391.6,512.7 392.0,514.0 C392.4,515.3 392.9,517.3 393.1,518.0" stroke="#c3c3c3" stroke-width="13.5"/>
<path d="M-20.0,343.0 C-16.7,341.5 -4.0,336.0 0.0,334.1 C4.0,332.2 2.7,332.4 4.0,331.6 C5.3,330.8 6.7,330.2 8.0,329.6 C9.3,328.9 10.7,328.4 12.0,327.9 C13.3,327.4 14.7,327.0 16.0,326.6 C17.3,326.2 18.7,325.8 20.0,325.5 C21.3,325.2 22.7,324.9 24.0,324.6 C25.3,324.3 26.7,324.1 28.0,323.9 C29.3,323.6 30.7,323.4 32.0,323.2 C33.3,323.0 34.7,322.9 36.0,322.7 C37.3,322.5 38.7,322.3 40.0,322.2 C41.3,322.0 42.7,321.8 44.0,321.7 C45.3,321.5 46.7,321.4 48.0,321.2 C49.3,321.1 50.7,320.9 52.0,320.8 C53.3,320.6 54.7,320.5 56.0,320.4 C57.3,320.2 58.7,320.1 60.0,320.0 C61.3,319.8 62.7,319.7 64.0,319.6 C65.3,319.5 66.7,319.4 68.0,319.3 C69.3,319.2 70.7,319.1 72.0,319.0 C73.3,318.9 74.7,318.8 76.0,318.8 C77.3,318.7 78.7,318.7 80.0,318.7 C81.3,318.7 82.7,318.7 84.0,318.7 C85.3,318.7 86.7,318.7 88.0,318.8 C89.3,318.9 90.7,319.0 92.0,319.1 C93.3,319.2 94.7,319.4 96.0,319.5 C97.3,319.7 98.7,319.9 100.0,320.2 C101.3,320.4 102.7,320.7 104.0,321.0 C105.3,321.3 106.7,321.6 108.0,322.0 C109.3,322.4 110.7,322.8 112.0,323.2 C113.3,323.7 114.7,324.2 116.0,324.7 C117.3,325.2 118.7,325.8 120.0,326.4 C121.3,327.0 122.7,327.6 124.0,328.2 C125.3,328.9 126.7,329.6 128.0,330.3 C129.3,331.1 130.7,331.8 132.0,332.6 C133.3,333.4 134.7,334.2 136.0,335.0 C137.3,335.8 138.7,336.7 140.0,337.6 C141.3,338.4 142.7,339.3 144.0,340.2 C145.3,341.1 146.7,341.9 148.0,342.8 C149.3,343.7 150.7,344.6 152.0,345.5 C153.3,346.3 154.7,347.2 156.0,348.0 C157.3,348.8 157.7,348.7 160.0,350.3 C162.3,351.9 166.3,354.9 170.0,357.5 C173.7,360.1 180.0,364.6 182.0,366.0" stroke="#c3c3c3" stroke-width="13.5"/>
<path d="M222.0,445.0 C220.1,449.8 212.6,468.5 210.8,474.0 C208.9,479.5 210.8,476.7 210.8,478.0 C210.7,479.3 210.6,480.7 210.4,482.0 C210.3,483.3 210.0,484.7 209.8,486.0 C209.5,487.3 209.2,488.7 208.9,490.0 C208.5,491.3 208.1,492.7 207.7,494.0 C207.3,495.3 206.8,496.7 206.3,498.0 C205.8,499.3 205.3,500.7 204.8,502.0 C204.2,503.3 203.7,504.7 203.1,506.0 C202.5,507.3 201.9,508.7 201.2,510.0 C200.6,511.3 200.0,512.7 199.3,514.0 C198.6,515.3 198.0,516.7 197.3,518.0 C196.6,519.3 195.9,520.7 195.2,522.0 C194.5,523.3 193.8,524.7 193.0,526.0 C192.3,527.3 191.6,528.7 190.9,530.0 C190.1,531.3 189.4,532.7 188.7,534.0 C187.9,535.3 187.2,536.7 186.5,538.0 C185.8,539.3 185.0,540.7 184.3,542.0 C183.6,543.3 182.9,544.7 182.2,546.0 C181.5,547.3 180.7,548.7 180.1,550.0 C179.4,551.3 178.7,552.7 178.0,554.0 C177.3,555.3 176.6,556.7 176.0,558.0 C175.3,559.3 174.7,560.7 174.0,562.0 C173.4,563.3 172.7,564.7 172.1,566.0 C171.5,567.3 170.9,568.7 170.3,570.0 C169.7,571.3 169.1,572.7 168.6,574.0 C168.0,575.3 167.5,576.7 166.9,578.0 C166.4,579.3 165.9,580.7 165.4,582.0 C164.9,583.3 164.4,584.7 163.9,586.0 C163.4,587.3 162.9,588.7 162.5,590.0 C162.1,591.3 161.6,592.7 161.2,594.0 C160.8,595.3 160.4,596.7 160.0,598.0 C159.6,599.3 159.2,600.7 158.9,602.0 C158.5,603.3 158.2,604.7 157.9,606.0 C157.6,607.3 157.3,608.7 157.0,610.0 C156.7,611.3 156.4,612.7 156.1,614.0 C155.9,615.3 155.6,616.7 155.4,618.0 C155.2,619.3 155.0,620.7 154.8,622.0 C154.5,623.3 154.4,624.7 154.2,626.0 C154.0,627.3 153.9,628.7 153.7,630.0 C153.6,631.3 153.5,632.7 153.3,634.0 C153.2,635.3 153.1,636.7 153.0,638.0 C153.0,639.3 152.9,640.7 152.8,642.0 C152.8,643.3 152.7,644.7 152.7,646.0 C152.7,647.3 152.6,648.7 152.6,650.0 C152.6,651.3 152.6,651.5 152.7,654.0 C152.7,656.5 152.3,614.0 153.1,665.0 C153.9,716.0 156.7,910.8 157.4,960.0" stroke="#c3c3c3" stroke-width="28.3"/>
<path d="M292.0,446.0 C294.1,449.7 302.1,463.7 304.5,468.0 C306.8,472.3 305.6,470.7 306.1,472.0 C306.6,473.3 307.1,474.7 307.6,476.0 C308.1,477.3 308.6,478.7 309.0,480.0 C309.5,481.3 310.0,482.7 310.4,484.0 C310.8,485.3 311.3,486.7 311.7,488.0 C312.1,489.3 312.5,490.7 312.9,492.0 C313.3,493.3 313.7,494.7 314.0,496.0 C314.4,497.3 314.8,498.7 315.1,500.0 C315.5,501.3 315.8,502.7 316.1,504.0 C316.4,505.3 316.8,506.7 317.1,508.0 C317.4,509.3 317.7,510.7 318.0,512.0 C318.2,513.3 318.5,514.7 318.8,516.0 C319.1,517.3 319.3,518.7 319.6,520.0 C319.8,521.3 320.0,522.7 320.3,524.0 C320.5,525.3 320.7,526.7 321.0,528.0 C321.2,529.3 321.4,530.7 321.6,532.0 C321.8,533.3 322.0,534.7 322.2,536.0 C322.4,537.3 322.5,538.7 322.7,540.0 C322.9,541.3 323.0,542.7 323.2,544.0 C323.4,545.3 323.5,546.7 323.7,548.0 C323.8,549.3 324.0,550.7 324.1,552.0 C324.2,553.3 324.4,554.7 324.5,556.0 C324.6,557.3 324.7,558.7 324.8,560.0 C325.0,561.3 325.1,562.7 325.2,564.0 C325.3,565.3 325.4,566.7 325.5,568.0 C325.6,569.3 325.7,570.7 325.8,572.0 C325.9,573.3 325.9,574.7 326.0,576.0 C326.1,577.3 326.2,578.7 326.3,580.0 C326.3,581.3 326.4,582.7 326.5,584.0 C326.6,585.3 326.6,586.7 326.7,588.0 C326.8,589.3 326.8,590.7 326.9,592.0 C326.9,593.3 327.0,594.7 327.1,596.0 C327.1,597.3 327.2,598.7 327.2,600.0 C327.3,601.3 327.3,602.7 327.4,604.0 C327.4,605.3 327.5,606.7 327.6,608.0 C327.6,609.3 327.7,610.7 327.7,612.0 C327.8,613.3 327.8,614.7 327.9,616.0 C327.9,617.3 328.0,618.7 328.0,620.0 C328.1,621.3 328.1,622.7 328.2,624.0 C328.2,625.3 328.3,626.7 328.3,628.0 C328.4,629.3 328.5,630.7 328.5,632.0 C328.6,633.3 328.6,634.7 328.7,636.0 C328.7,637.3 328.8,638.7 328.9,640.0 C328.9,641.3 329.0,642.7 329.1,644.0 C329.1,645.3 329.2,646.7 329.3,648.0 C329.4,649.3 329.4,650.7 329.5,652.0 C329.6,653.3 329.7,654.7 329.8,656.0 C329.9,657.3 329.9,658.7 330.0,660.0 C330.1,661.3 330.2,662.7 330.3,664.0 C330.4,665.3 330.5,666.7 330.6,668.0 C330.8,669.3 330.9,670.7 331.0,672.0 C331.1,673.3 331.2,674.7 331.3,676.0 C331.5,677.3 331.6,678.7 331.7,680.0 C331.9,681.3 332.0,682.7 332.2,684.0 C332.3,685.3 332.5,686.7 332.6,688.0 C332.8,689.3 332.9,690.7 333.1,692.0 C333.3,693.3 333.5,694.7 333.6,696.0 C333.8,697.3 331.1,656.0 334.2,700.0 C337.3,744.0 349.3,916.7 352.3,960.0" stroke="#c3c3c3" stroke-width="28.5"/>
<path d="M318.0,446.0 C320.0,447.0 326.0,449.8 330.0,452.0 C334.0,454.2 338.1,456.5 342.0,459.0 C345.9,461.5 349.7,463.8 353.4,467.2 C357.1,470.6 360.5,475.0 364.0,479.5 C367.5,484.0 371.0,489.1 374.5,494.0 C378.0,498.9 383.2,506.5 385.0,509.0" stroke="#c3c3c3" stroke-width="16.5"/>
<circle cx="250" cy="387" r="75.1" stroke="#c3c3c3" stroke-width="28.999999999999993"/>
</g>
<path d="M194.8,457.6 A89.6,89.6 0 0 1 163.1,365.3 L191.2,372.3 A60.6,60.6 0 0 0 212.7,434.8 Z" fill="#e9442f"/>
<circle cx="250" cy="387" r="60" fill="#ffff00" stroke="#1c1c1c" stroke-width="1.3"/>
<path d="M194.5,458.1 A90.19999999999999,90.19999999999999 0 0 1 162.5,365.2" fill="none" stroke="#1c1c1c" stroke-width="1.3"/>
<defs>
<clipPath id="cw"><polygon points="16.1,250 140,250 185,320 167,347 159.9,359 140,400 33.9,400"/></clipPath>
<clipPath id="cwb"><polygon points="-20,250 -5.4,250 37.8,400 -20,400"/></clipPath>
<clipPath id="csw"><polygon points="120,474 195.6,471.5 225.5,474.6 260,476 260,651.5 120,639.1"/></clipPath>
<clipPath id="cswb"><polygon points="100,653 200,655 200,960 100,960"/></clipPath>
</defs>
<path d="M-20.0,343.0 C-16.7,341.5 -4.0,336.0 0.0,334.1 C4.0,332.2 2.7,332.4 4.0,331.6 C5.3,330.8 6.7,330.2 8.0,329.6 C9.3,328.9 10.7,328.4 12.0,327.9 C13.3,327.4 14.7,327.0 16.0,326.6 C17.3,326.2 18.7,325.8 20.0,325.5 C21.3,325.2 22.7,324.9 24.0,324.6 C25.3,324.3 26.7,324.1 28.0,323.9 C29.3,323.6 30.7,323.4 32.0,323.2 C33.3,323.0 34.7,322.9 36.0,322.7 C37.3,322.5 38.7,322.3 40.0,322.2 C41.3,322.0 42.7,321.8 44.0,321.7 C45.3,321.5 46.7,321.4 48.0,321.2 C49.3,321.1 50.7,320.9 52.0,320.8 C53.3,320.6 54.7,320.5 56.0,320.4 C57.3,320.2 58.7,320.1 60.0,320.0 C61.3,319.8 62.7,319.7 64.0,319.6 C65.3,319.5 66.7,319.4 68.0,319.3 C69.3,319.2 70.7,319.1 72.0,319.0 C73.3,318.9 74.7,318.8 76.0,318.8 C77.3,318.7 78.7,318.7 80.0,318.7 C81.3,318.7 82.7,318.7 84.0,318.7 C85.3,318.7 86.7,318.7 88.0,318.8 C89.3,318.9 90.7,319.0 92.0,319.1 C93.3,319.2 94.7,319.4 96.0,319.5 C97.3,319.7 98.7,319.9 100.0,320.2 C101.3,320.4 102.7,320.7 104.0,321.0 C105.3,321.3 106.7,321.6 108.0,322.0 C109.3,322.4 110.7,322.8 112.0,323.2 C113.3,323.7 114.7,324.2 116.0,324.7 C117.3,325.2 118.7,325.8 120.0,326.4 C121.3,327.0 122.7,327.6 124.0,328.2 C125.3,328.9 126.7,329.6 128.0,330.3 C129.3,331.1 130.7,331.8 132.0,332.6 C133.3,333.4 134.7,334.2 136.0,335.0 C137.3,335.8 138.7,336.7 140.0,337.6 C141.3,338.4 142.7,339.3 144.0,340.2 C145.3,341.1 146.7,341.9 148.0,342.8 C149.3,343.7 150.7,344.6 152.0,345.5 C153.3,346.3 154.7,347.2 156.0,348.0 C157.3,348.8 157.7,348.7 160.0,350.3 C162.3,351.9 166.3,354.9 170.0,357.5 C173.7,360.1 180.0,364.6 182.0,366.0" stroke="#e9442f" stroke-width="13.5" fill="none" clip-path="url(#cw)"/>
<path d="M-20.0,343.0 C-16.7,341.5 -4.0,336.0 0.0,334.1 C4.0,332.2 2.7,332.4 4.0,331.6 C5.3,330.8 6.7,330.2 8.0,329.6 C9.3,328.9 10.7,328.4 12.0,327.9 C13.3,327.4 14.7,327.0 16.0,326.6 C17.3,326.2 18.7,325.8 20.0,325.5 C21.3,325.2 22.7,324.9 24.0,324.6 C25.3,324.3 26.7,324.1 28.0,323.9 C29.3,323.6 30.7,323.4 32.0,323.2 C33.3,323.0 34.7,322.9 36.0,322.7 C37.3,322.5 38.7,322.3 40.0,322.2 C41.3,322.0 42.7,321.8 44.0,321.7 C45.3,321.5 46.7,321.4 48.0,321.2 C49.3,321.1 50.7,320.9 52.0,320.8 C53.3,320.6 54.7,320.5 56.0,320.4 C57.3,320.2 58.7,320.1 60.0,320.0 C61.3,319.8 62.7,319.7 64.0,319.6 C65.3,319.5 66.7,319.4 68.0,319.3 C69.3,319.2 70.7,319.1 72.0,319.0 C73.3,318.9 74.7,318.8 76.0,318.8 C77.3,318.7 78.7,318.7 80.0,318.7 C81.3,318.7 82.7,318.7 84.0,318.7 C85.3,318.7 86.7,318.7 88.0,318.8 C89.3,318.9 90.7,319.0 92.0,319.1 C93.3,319.2 94.7,319.4 96.0,319.5 C97.3,319.7 98.7,319.9 100.0,320.2 C101.3,320.4 102.7,320.7 104.0,321.0 C105.3,321.3 106.7,321.6 108.0,322.0 C109.3,322.4 110.7,322.8 112.0,323.2 C113.3,323.7 114.7,324.2 116.0,324.7 C117.3,325.2 118.7,325.8 120.0,326.4 C121.3,327.0 122.7,327.6 124.0,328.2 C125.3,328.9 126.7,329.6 128.0,330.3 C129.3,331.1 130.7,331.8 132.0,332.6 C133.3,333.4 134.7,334.2 136.0,335.0 C137.3,335.8 138.7,336.7 140.0,337.6 C141.3,338.4 142.7,339.3 144.0,340.2 C145.3,341.1 146.7,341.9 148.0,342.8 C149.3,343.7 150.7,344.6 152.0,345.5 C153.3,346.3 154.7,347.2 156.0,348.0 C157.3,348.8 157.7,348.7 160.0,350.3 C162.3,351.9 166.3,354.9 170.0,357.5 C173.7,360.1 180.0,364.6 182.0,366.0" stroke="#66c3fd" stroke-width="13.5" fill="none" clip-path="url(#cwb)"/>
<path d="M222.0,445.0 C220.1,449.8 212.6,468.5 210.8,474.0 C208.9,479.5 210.8,476.7 210.8,478.0 C210.7,479.3 210.6,480.7 210.4,482.0 C210.3,483.3 210.0,484.7 209.8,486.0 C209.5,487.3 209.2,488.7 208.9,490.0 C208.5,491.3 208.1,492.7 207.7,494.0 C207.3,495.3 206.8,496.7 206.3,498.0 C205.8,499.3 205.3,500.7 204.8,502.0 C204.2,503.3 203.7,504.7 203.1,506.0 C202.5,507.3 201.9,508.7 201.2,510.0 C200.6,511.3 200.0,512.7 199.3,514.0 C198.6,515.3 198.0,516.7 197.3,518.0 C196.6,519.3 195.9,520.7 195.2,522.0 C194.5,523.3 193.8,524.7 193.0,526.0 C192.3,527.3 191.6,528.7 190.9,530.0 C190.1,531.3 189.4,532.7 188.7,534.0 C187.9,535.3 187.2,536.7 186.5,538.0 C185.8,539.3 185.0,540.7 184.3,542.0 C183.6,543.3 182.9,544.7 182.2,546.0 C181.5,547.3 180.7,548.7 180.1,550.0 C179.4,551.3 178.7,552.7 178.0,554.0 C177.3,555.3 176.6,556.7 176.0,558.0 C175.3,559.3 174.7,560.7 174.0,562.0 C173.4,563.3 172.7,564.7 172.1,566.0 C171.5,567.3 170.9,568.7 170.3,570.0 C169.7,571.3 169.1,572.7 168.6,574.0 C168.0,575.3 167.5,576.7 166.9,578.0 C166.4,579.3 165.9,580.7 165.4,582.0 C164.9,583.3 164.4,584.7 163.9,586.0 C163.4,587.3 162.9,588.7 162.5,590.0 C162.1,591.3 161.6,592.7 161.2,594.0 C160.8,595.3 160.4,596.7 160.0,598.0 C159.6,599.3 159.2,600.7 158.9,602.0 C158.5,603.3 158.2,604.7 157.9,606.0 C157.6,607.3 157.3,608.7 157.0,610.0 C156.7,611.3 156.4,612.7 156.1,614.0 C155.9,615.3 155.6,616.7 155.4,618.0 C155.2,619.3 155.0,620.7 154.8,622.0 C154.5,623.3 154.4,624.7 154.2,626.0 C154.0,627.3 153.9,628.7 153.7,630.0 C153.6,631.3 153.5,632.7 153.3,634.0 C153.2,635.3 153.1,636.7 153.0,638.0 C153.0,639.3 152.9,640.7 152.8,642.0 C152.8,643.3 152.7,644.7 152.7,646.0 C152.7,647.3 152.6,648.7 152.6,650.0 C152.6,651.3 152.6,651.5 152.7,654.0 C152.7,656.5 152.3,614.0 153.1,665.0 C153.9,716.0 156.7,910.8 157.4,960.0" stroke="#e9442f" stroke-width="28.3" fill="none" clip-path="url(#csw)"/>
<path d="M222.0,445.0 C220.1,449.8 212.6,468.5 210.8,474.0 C208.9,479.5 210.8,476.7 210.8,478.0 C210.7,479.3 210.6,480.7 210.4,482.0 C210.3,483.3 210.0,484.7 209.8,486.0 C209.5,487.3 209.2,488.7 208.9,490.0 C208.5,491.3 208.1,492.7 207.7,494.0 C207.3,495.3 206.8,496.7 206.3,498.0 C205.8,499.3 205.3,500.7 204.8,502.0 C204.2,503.3 203.7,504.7 203.1,506.0 C202.5,507.3 201.9,508.7 201.2,510.0 C200.6,511.3 200.0,512.7 199.3,514.0 C198.6,515.3 198.0,516.7 197.3,518.0 C196.6,519.3 195.9,520.7 195.2,522.0 C194.5,523.3 193.8,524.7 193.0,526.0 C192.3,527.3 191.6,528.7 190.9,530.0 C190.1,531.3 189.4,532.7 188.7,534.0 C187.9,535.3 187.2,536.7 186.5,538.0 C185.8,539.3 185.0,540.7 184.3,542.0 C183.6,543.3 182.9,544.7 182.2,546.0 C181.5,547.3 180.7,548.7 180.1,550.0 C179.4,551.3 178.7,552.7 178.0,554.0 C177.3,555.3 176.6,556.7 176.0,558.0 C175.3,559.3 174.7,560.7 174.0,562.0 C173.4,563.3 172.7,564.7 172.1,566.0 C171.5,567.3 170.9,568.7 170.3,570.0 C169.7,571.3 169.1,572.7 168.6,574.0 C168.0,575.3 167.5,576.7 166.9,578.0 C166.4,579.3 165.9,580.7 165.4,582.0 C164.9,583.3 164.4,584.7 163.9,586.0 C163.4,587.3 162.9,588.7 162.5,590.0 C162.1,591.3 161.6,592.7 161.2,594.0 C160.8,595.3 160.4,596.7 160.0,598.0 C159.6,599.3 159.2,600.7 158.9,602.0 C158.5,603.3 158.2,604.7 157.9,606.0 C157.6,607.3 157.3,608.7 157.0,610.0 C156.7,611.3 156.4,612.7 156.1,614.0 C155.9,615.3 155.6,616.7 155.4,618.0 C155.2,619.3 155.0,620.7 154.8,622.0 C154.5,623.3 154.4,624.7 154.2,626.0 C154.0,627.3 153.9,628.7 153.7,630.0 C153.6,631.3 153.5,632.7 153.3,634.0 C153.2,635.3 153.1,636.7 153.0,638.0 C153.0,639.3 152.9,640.7 152.8,642.0 C152.8,643.3 152.7,644.7 152.7,646.0 C152.7,647.3 152.6,648.7 152.6,650.0 C152.6,651.3 152.6,651.5 152.7,654.0 C152.7,656.5 152.3,614.0 153.1,665.0 C153.9,716.0 156.7,910.8 157.4,960.0" stroke="#66c3fd" stroke-width="28.3" fill="none" clip-path="url(#cswb)"/>
<path d="M117.3,-15.6L119.9,-5.7M122.5,3.5L125.3,13.4M128.0,22.6L131.0,32.3M133.8,41.5L136.9,51.2M139.9,60.3L143.1,70.0M146.1,79.1L149.3,88.8M152.4,97.9L155.7,107.6M158.8,116.6L162.1,126.3M165.2,135.4L168.4,145.1M171.5,154.2L174.7,163.8M177.7,173.0L180.8,182.7M183.7,191.8L186.7,201.6M189.4,210.8L192.2,220.6M194.8,229.8L197.5,239.7M199.9,249.0L202.3,258.9M280.0,126.5L280.5,138.0M280.8,146.3L281.2,157.8M281.5,166.1L281.8,177.6M282.1,185.9L282.3,197.4M282.5,205.7L282.7,217.2M282.8,225.5L282.9,237.0M283.0,245.3L283.1,256.8M283.2,265.1L283.3,276.6M283.3,284.9L283.4,296.4M267.4,-13.2L268.9,-1.8M270.0,6.4L271.4,17.8M272.3,26.1L273.5,37.5M279,106L279.3,116.8M211.0,473.5L210.1,483.9M208.0,493.0L204.4,502.8M200.6,511.3L195.9,520.7M191.5,528.9L186.4,538.1M182.0,546.3L177.2,555.6M173.1,564.0L168.8,573.5M165.3,582.1L161.8,592.1M159.2,601.0L156.7,611.2M155.0,620.3L153.7,630.7M152.7,653.0L153.0,663.5M153.2,672.6L153.4,683.1M153.5,692.2L153.6,702.7M153.8,711.8L153.9,722.3M154.1,731.4L154.2,741.9M154.4,751.0L154.5,761.5M154.6,770.6L154.8,781.1M154.9,790.2L155.1,800.7M155.2,809.8L155.4,820.3M155.5,829.4L155.6,839.9M155.8,849.0L155.9,859.5M156.1,868.6L156.2,879.1M156.4,888.2L156.5,898.7M156.6,907.8L156.8,918.3M156.9,927.4L157.1,937.9M157.2,947.0L157.4,957.5M315.0,499.6L317.5,510.1M319.5,519.6L321.3,530.2M322.7,539.8L323.9,550.6M324.9,560.2L325.7,571.0M326.3,580.7L326.9,591.5M327.3,601.2L327.7,611.9M328.1,621.6L328.5,632.4M329.0,642.1L329.6,652.9M330.2,662.6L331.1,673.3M332.1,683.0L333.3,693.7M334.4,703.4L335.2,714.1M335.9,723.8L336.6,734.6M337.3,744.3L338.0,755.0M338.7,764.7L339.5,775.5M340.1,785.2L340.9,795.9M341.5,805.6L342.3,816.4M343.0,826.1L343.7,836.8M344.4,846.5L345.1,857.3M345.8,867.0L346.6,877.7M347.2,887.4L348.0,898.2M348.7,907.9L349.4,918.6M350.1,928.3L350.8,939.1M351.5,948.8L352.3,959.5" stroke="#fff" stroke-width="1.1" fill="none"/>
<circle cx="250" cy="387" r="75.1" stroke="#fff" stroke-width="1.05" stroke-dasharray="10 10" fill="none"/>
<polygon points="584,930 619,930 624,941 589,941" fill="#b8b8b8"/>
<path d="M584.5,930L589.5,941M601.5,930L606.5,941M618.5,930L623.5,941" stroke="#222" stroke-width="1.3"/>
<polygon transform="translate(271,110.4) rotate(0) scale(1.05)" points="0,-7.2 4.1,-1.6 1.3,-1.6 1.3,7.2 -1.3,7.2 -1.3,-1.6 -4.1,-1.6" fill="#fff"/>
<polygon transform="translate(286.3,109.2) rotate(0) scale(1.05)" points="0,-7.2 4.1,-1.6 1.3,-1.6 1.3,7.2 -1.3,7.2 -1.3,-1.6 -4.1,-1.6" fill="#fff"/>
<polygon transform="translate(305.6,116.5) rotate(-11) scale(1.05)" points="0,-7.2 4.1,-1.6 1.3,-1.6 1.3,7.2 -1.3,7.2 -1.3,-1.6 -4.1,-1.6" fill="#fff"/>
<polygon transform="translate(245.5,305) rotate(-90) scale(1.05)" points="0,-7.2 4.1,-1.6 1.3,-1.6 1.3,7.2 -1.3,7.2 -1.3,-1.6 -4.1,-1.6" fill="#fff"/>
<polygon transform="translate(249.5,319.5) rotate(-90) scale(1.05)" points="0,-7.2 4.1,-1.6 1.3,-1.6 1.3,7.2 -1.3,7.2 -1.3,-1.6 -4.1,-1.6" fill="#fff"/>
<polygon transform="translate(184.5,336) rotate(-140) scale(1.05)" points="0,-7.2 4.1,-1.6 1.3,-1.6 1.3,7.2 -1.3,7.2 -1.3,-1.6 -4.1,-1.6" fill="#fff"/>
<polygon transform="translate(197.5,343) rotate(-145) scale(1.05)" points="0,-7.2 4.1,-1.6 1.3,-1.6 1.3,7.2 -1.3,7.2 -1.3,-1.6 -4.1,-1.6" fill="#fff"/>
<polygon transform="translate(311.5,329) rotate(-45) scale(1.05)" points="0,-7.2 4.1,-1.6 1.3,-1.6 1.3,7.2 -1.3,7.2 -1.3,-1.6 -4.1,-1.6" fill="#fff"/>
<polygon transform="translate(302.6,340.7) rotate(-45) scale(1.05)" points="0,-7.2 4.1,-1.6 1.3,-1.6 1.3,7.2 -1.3,7.2 -1.3,-1.6 -4.1,-1.6" fill="#fff"/>
<polygon transform="translate(195.7,428.4) rotate(125) scale(1.05)" points="0,-7.2 4.1,-1.6 1.3,-1.6 1.3,7.2 -1.3,7.2 -1.3,-1.6 -4.1,-1.6" fill="#fff"/>
<polygon transform="translate(185.8,440.8) rotate(125) scale(1.05)" points="0,-7.2 4.1,-1.6 1.3,-1.6 1.3,7.2 -1.3,7.2 -1.3,-1.6 -4.1,-1.6" fill="#fff"/>
<polygon transform="translate(257.5,455) rotate(90) scale(1.05)" points="0,-7.2 4.1,-1.6 1.3,-1.6 1.3,7.2 -1.3,7.2 -1.3,-1.6 -4.1,-1.6" fill="#fff"/>
<polygon transform="translate(266.8,468.5) rotate(90) scale(1.05)" points="0,-7.2 4.1,-1.6 1.3,-1.6 1.3,7.2 -1.3,7.2 -1.3,-1.6 -4.1,-1.6" fill="#fff"/>
<polygon transform="translate(321.2,639.4) rotate(-5) scale(1.05)" points="0,-7.2 4.1,-1.6 1.3,-1.6 1.3,7.2 -1.3,7.2 -1.3,-1.6 -4.1,-1.6" fill="#fff"/>
<polygon transform="translate(335.7,638.4) rotate(-5) scale(1.05)" points="0,-7.2 4.1,-1.6 1.3,-1.6 1.3,7.2 -1.3,7.2 -1.3,-1.6 -4.1,-1.6" fill="#fff"/>
<polygon transform="translate(145.9,625) rotate(180) scale(1.05)" points="0,-7.2 4.1,-1.6 1.3,-1.6 1.3,7.2 -1.3,7.2 -1.3,-1.6 -4.1,-1.6" fill="#fff"/>
<polygon transform="translate(161.2,625.9) rotate(180) scale(1.05)" points="0,-7.2 4.1,-1.6 1.3,-1.6 1.3,7.2 -1.3,7.2 -1.3,-1.6 -4.1,-1.6" fill="#fff"/>
<polygon transform="translate(302.3,102.6) rotate(180)" points="0,-3.6 3.8,2.8 -3.8,2.8" fill="#e9442f" stroke="#fff" stroke-width="0.9" stroke-linejoin="round"/>
<polygon transform="translate(202.3,292) rotate(-10)" points="0,-3.6 3.8,2.8 -3.8,2.8" fill="#e9442f" stroke="#fff" stroke-width="0.9" stroke-linejoin="round"/>
<polygon transform="translate(217,290) rotate(-10)" points="0,-3.6 3.8,2.8 -3.8,2.8" fill="#e9442f" stroke="#fff" stroke-width="0.9" stroke-linejoin="round"/>
<polygon transform="translate(298.7,477.7) rotate(170)" points="0,-3.6 3.8,2.8 -3.8,2.8" fill="#e9442f" stroke="#fff" stroke-width="0.9" stroke-linejoin="round"/>
<polygon transform="translate(313.1,472.6) rotate(170)" points="0,-3.6 3.8,2.8 -3.8,2.8" fill="#e9442f" stroke="#fff" stroke-width="0.9" stroke-linejoin="round"/>
<polygon transform="translate(153.9,348.2) rotate(200)" points="0,-3.6 3.8,2.8 -3.8,2.8" fill="none" stroke="#fff" stroke-width="1.1"/>
<polygon transform="translate(197.5,276) rotate(-90)" points="-2.6,1 -1.2,-1 1.2,-3.2 3.2,-2.6 3.4,-0.4 1.2,0.8 0.4,2.2 0.6,3.6 -1.6,3.6 -2.8,2.6" fill="#fff"/>
<polygon transform="translate(212,273.5) rotate(-90)" points="-2.6,1 -1.2,-1 1.2,-3.2 3.2,-2.6 3.4,-0.4 1.2,0.8 0.4,2.2 0.6,3.6 -1.6,3.6 -2.8,2.6" fill="#fff"/>
<polygon transform="translate(306,493.2) rotate(0)" points="-2.6,1 -1.2,-1 1.2,-3.2 3.2,-2.6 3.4,-0.4 1.2,0.8 0.4,2.2 0.6,3.6 -1.6,3.6 -2.8,2.6" fill="#fff"/>
<polygon transform="translate(320.4,489) rotate(0)" points="-2.6,1 -1.2,-1 1.2,-3.2 3.2,-2.6 3.4,-0.4 1.2,0.8 0.4,2.2 0.6,3.6 -1.6,3.6 -2.8,2.6" fill="#fff"/>
<polygon transform="translate(138.7,338.4) rotate(-10)" points="-2.6,1 -1.2,-1 1.2,-3.2 3.2,-2.6 3.4,-0.4 1.2,0.8 0.4,2.2 0.6,3.6 -1.6,3.6 -2.8,2.6" fill="#fff"/>
<polygon transform="translate(4,333) rotate(-30)" points="-2.6,1 -1.2,-1 1.2,-3.2 3.2,-2.6 3.4,-0.4 1.2,0.8 0.4,2.2 0.6,3.6 -1.6,3.6 -2.8,2.6" fill="#fff"/>
<rect x="6.6" y="269.4" width="254.9" height="414" fill="none" stroke="#e8161f" stroke-width="3"/>
</svg><div class="a" style="left:374px;top:4px;width:593px;height:932px;background:#f6f6f6;background-clip:padding-box;border:1px solid rgba(0,0,0,.40);box-shadow:0 0 11px 1px rgba(0,0,0,.22);"></div>
<div class="a" style="left:375px;top:5px;width:591px;height:37px;background:#fff;"></div>
<svg class="a" style="left:383px;top:12px" width="22" height="22" viewBox="0 0 22 22"><circle cx="11" cy="11" r="10" fill="#2b82d9"/><text x="12" y="16" font-family="Liberation Sans" font-size="14" fill="#fff" text-anchor="middle">n</text><circle cx="5.6" cy="15.2" r="1" fill="#f0b030"/></svg>
<div class="t" style="left:410px;top:15.21px;font-size:14.4px;line-height:17px;color:#9a9a9a;">Transit Route Change: 2609, Name: L-Brown&nbsp; {c8020422-940d-49...</div>
<div class="t" style="left:875px;top:15.00px;font-size:15px;line-height:17px;color:#8a8a8a;">?</div>
<svg class="a" style="left:929px;top:16px" width="14" height="14" viewBox="0 0 14 14"><path d="M1 1L13 13M13 1L1 13" stroke="#555" stroke-width="1.1"/></svg>
<div class="a" style="left:386px;top:76px;width:567px;height:813px;background:#fff;border:1px solid #d9d9d9;"></div>
<div class="a" style="left:386px;top:53px;width:57px;height:24px;background:#fff;border:1px solid #d9d9d9;border-bottom:none;"></div>
<div class="t" style="left:401.3px;top:58.00px;font-size:13px;line-height:15px;color:#000;">Main</div>
<div class="t" style="left:397.5px;top:90.80px;font-size:13px;line-height:15px;color:#000;">Name:</div>
<div class="a" style="left:441px;top:87px;width:211px;height:22px;border:1px solid #7a7a7a;background:#fff;"></div>
<div class="t" style="left:444.6px;top:90.80px;font-size:13px;line-height:15px;color:#000;">L-Brown</div>
<div class="t" style="left:658.6px;top:90.80px;font-size:13px;line-height:15px;color:#000;">External ID:</div>
<div class="a" style="left:731px;top:87px;width:211px;height:22px;border:1px solid #7a7a7a;background:#fff;"></div>
<div class="t" style="left:397.5px;top:122.00px;font-size:13px;line-height:15px;color:#000;">Transit Line:</div>
<div class="a" style="left:591px;top:115px;width:351px;height:28px;border:1px solid #adadad;background:#e1e1e1;"></div>
<svg class="a" style="left:597px;top:118px" width="20" height="23" viewBox="0 0 20 23"><rect x="0.5" y="0.5" width="18" height="18" rx="4" fill="#9a9a9a"/><rect x="3" y="4.5" width="13" height="5" fill="#e1e1e1"/><circle cx="4.5" cy="14.5" r="1.6" fill="#e1e1e1"/><circle cx="14.5" cy="14.5" r="1.6" fill="#e1e1e1"/><rect x="1.5" y="17" width="4" height="5" rx="1.5" fill="#9a9a9a"/><rect x="13.5" y="17" width="4" height="5" rx="1.5" fill="#9a9a9a"/></svg>
<div class="t" style="left:621.2px;top:121.70px;font-size:13px;line-height:15px;color:#000;">2255: L-Brown</div>
<svg class="a" style="left:925px;top:125px" width="12" height="8" viewBox="0 0 12 8"><path d="M1 1.5L6 6.5L11 1.5" stroke="#444" stroke-width="1.1" fill="none"/></svg>
<div class="a" style="left:397px;top:157px;width:188px;height:556px;border:1px solid #dcdcdc;"></div>
<div class="t" style="left:407.5px;top:149.80px;font-size:13px;line-height:15px;color:#000;background:#fff;padding:0 3px;margin-left:-3px;">Original Route</div>
<div class="a" style="left:626px;top:157px;width:316px;height:107px;border:1px solid #dcdcdc;"></div>
<div class="t" style="left:636.5px;top:149.80px;font-size:13px;line-height:15px;color:#000;background:#fff;padding:0 3px;margin-left:-3px;">Start Detour at Section</div>
<div class="a" style="left:626px;top:285px;width:316px;height:306px;border:1px solid #dcdcdc;"></div>
<div class="t" style="left:636.5px;top:278.00px;font-size:13px;line-height:15px;color:#000;background:#fff;padding:0 3px;margin-left:-3px;">Alternative Route</div>
<div class="a" style="left:626px;top:606px;width:316px;height:106px;border:1px solid #dcdcdc;"></div>
<div class="t" style="left:636px;top:599.00px;font-size:13px;line-height:15px;color:#000;background:#fff;padding:0 3px;margin-left:-3px;">Finish Detour at Section</div>
<div class="a" style="left:397px;top:728px;width:545px;height:147px;border:1px solid #dcdcdc;"></div>
<div class="t" style="left:407.8px;top:720.40px;font-size:13px;line-height:15px;color:#000;background:#fff;padding:0 3px;margin-left:-3px;">Dwell Times</div>
<div class="a" style="left:416px;top:184px;width:150px;height:511px;border:1px solid #828790;background:#fff;"></div>
<div class="a" style="left:480px;top:185px;width:1px;height:30px;background:#e5e5e5;"></div>
<div class="a" style="left:417px;top:215px;width:127px;height:30px;background:#efefef;"></div>
<div class="t" style="left:429.3px;top:193.25px;font-size:14px;line-height:16px;color:#000;font-weight:bold;">Stops</div>
<div class="a" style="left:485px;top:185px;width:54.5px;height:30px;overflow:hidden"><div class="t" style="left:-73.0px;width:200px;text-align:center;top:6.76px;font-size:15.4px;line-height:18px;color:#000;font-weight:bold;">Sections</div>
</div>
<div class="a" style="left:543px;top:185px;width:1px;height:30px;background:#e5e5e5;"></div>
<div class="t" style="left:484.5px;top:222.21px;font-size:14.7px;line-height:17px;color:#222;">2039</div>
<div class="t" style="left:484.5px;top:252.21px;font-size:14.7px;line-height:17px;color:#222;">2025</div>
<div class="t" style="left:484.5px;top:282.21px;font-size:14.7px;line-height:17px;color:#222;">1954</div>
<div class="t" style="left:484.5px;top:312.21px;font-size:14.7px;line-height:17px;color:#222;">1965</div>
<div class="t" style="left:484.5px;top:342.21px;font-size:14.7px;line-height:17px;color:#222;">1945</div>
<div class="t" style="left:484.5px;top:372.21px;font-size:14.7px;line-height:17px;color:#222;">1941</div>
<div class="t" style="left:421.6px;top:402.21px;font-size:14.7px;line-height:17px;color:#222;">2110: ...</div>
<div class="t" style="left:484.5px;top:402.21px;font-size:14.7px;line-height:17px;color:#222;">1942</div>
<div class="t" style="left:484.5px;top:432.21px;font-size:14.7px;line-height:17px;color:#222;">1943</div>
<div class="t" style="left:484.5px;top:462.21px;font-size:14.7px;line-height:17px;color:#222;">1992</div>
<div class="t" style="left:484.5px;top:492.21px;font-size:14.7px;line-height:17px;color:#222;">2332</div>
<div class="t" style="left:484.5px;top:522.21px;font-size:14.7px;line-height:17px;color:#222;">939</div>
<div class="t" style="left:421.6px;top:552.21px;font-size:14.7px;line-height:17px;color:#222;">2111: ...</div>
<div class="t" style="left:484.5px;top:552.21px;font-size:14.7px;line-height:17px;color:#222;">2336</div>
<div class="t" style="left:484.5px;top:582.21px;font-size:14.7px;line-height:17px;color:#222;">942</div>
<div class="t" style="left:484.5px;top:612.21px;font-size:14.7px;line-height:17px;color:#222;">1023</div>
<div class="t" style="left:484.5px;top:642.21px;font-size:14.7px;line-height:17px;color:#222;">1020</div>
<div class="t" style="left:421.6px;top:672.21px;font-size:14.7px;line-height:17px;color:#222;">1218: ...</div>
<div class="t" style="left:484.5px;top:672.21px;font-size:14.7px;line-height:17px;color:#222;">934</div>
<div class="a" style="left:544px;top:185px;width:21px;height:509px;background:#f0f0f0;"></div>
<div class="a" style="left:545px;top:206px;width:19px;height:350px;background:#cdcdcd;"></div>
<svg class="a" style="left:549px;top:191px" width="11" height="8" viewBox="0 0 11 8"><path d="M1 6.5L5.5 2L10 6.5" stroke="#555" stroke-width="2" fill="none"/></svg>
<svg class="a" style="left:549px;top:679px" width="11" height="8" viewBox="0 0 11 8"><path d="M1 1.5L5.5 6L10 1.5" stroke="#555" stroke-width="2" fill="none"/></svg>
<div class="a" style="left:592px;top:194px;width:27px;height:26px;border:1px solid #adadad;background:#e1e1e1;"></div>
<svg class="a" style="left:596px;top:200px" width="19" height="14" viewBox="0 0 19 14"><defs><linearGradient id="g194" x1="0" y1="0" x2="0" y2="1"><stop offset="0" stop-color="#00a050"/><stop offset="1" stop-color="#10e070"/></linearGradient></defs><path d="M1.5 4.2H9.5V1.2L17 7L9.5 12.8V9.8H1.5Z" fill="url(#g194)" stroke="#1f6b3a" stroke-width="0.9" stroke-linejoin="round"/></svg>
<div class="a" style="left:592px;top:643px;width:27px;height:26px;border:1px solid #adadad;background:#e1e1e1;"></div>
<svg class="a" style="left:596px;top:649px" width="19" height="14" viewBox="0 0 19 14"><defs><linearGradient id="g643" x1="0" y1="0" x2="0" y2="1"><stop offset="0" stop-color="#00a050"/><stop offset="1" stop-color="#10e070"/></linearGradient></defs><path d="M1.5 4.2H9.5V1.2L17 7L9.5 12.8V9.8H1.5Z" fill="url(#g643)" stroke="#1f6b3a" stroke-width="0.9" stroke-linejoin="round"/></svg>
<div class="a" style="left:645px;top:184px;width:278px;height:62px;border:1px solid #828790;background:#fff;"></div>
<div class="a" style="left:783px;top:185px;width:1px;height:30px;background:#e5e5e5;"></div>
<div class="a" style="left:921px;top:185px;width:1px;height:30px;background:#e5e5e5;"></div>
<div class="t" style="left:614.8px;width:200px;text-align:center;top:192.30px;font-size:15px;line-height:17px;color:#111;">Stops</div>
<div class="t" style="left:752.6px;width:200px;text-align:center;top:192.30px;font-size:15px;line-height:17px;color:#111;">Sections</div>
<div class="t" style="left:787.6px;top:222.31px;font-size:14.7px;line-height:17px;color:#222;">1992</div>
<div class="a" style="left:645px;top:312px;width:151px;height:261px;border:1px solid #828790;background:#fff;"></div>
<div class="a" style="left:720px;top:313px;width:1px;height:30px;background:#e5e5e5;"></div>
<div class="a" style="left:794px;top:313px;width:1px;height:30px;background:#e5e5e5;"></div>
<div class="t" style="left:665.4px;top:320.20px;font-size:15px;line-height:17px;color:#111;">Stops</div>
<div class="t" style="left:730.7px;top:320.20px;font-size:15px;line-height:17px;color:#111;">Sections</div>
<div class="t" style="left:724.7px;top:350.21px;font-size:14.7px;line-height:17px;color:#222;">2362</div>
<div class="t" style="left:724.7px;top:380.21px;font-size:14.7px;line-height:17px;color:#222;">2373</div>
<div class="t" style="left:724.7px;top:410.21px;font-size:14.7px;line-height:17px;color:#222;">2365</div>
<div class="a" style="left:812px;top:322px;width:101px;height:26px;border:1px solid #adadad;background:#e1e1e1;"></div>
<div class="t" style="left:762.5px;width:200px;text-align:center;top:328.63px;font-size:12.6px;line-height:14px;color:#000;">Remove</div>
<div class="a" style="left:812px;top:356px;width:101px;height:26px;border:1px solid #adadad;background:#e1e1e1;"></div>
<div class="t" style="left:762.5px;width:200px;text-align:center;top:362.63px;font-size:12.6px;line-height:14px;color:#000;">Remove All</div>
<div class="a" style="left:812px;top:390px;width:101px;height:26px;border:1px solid #adadad;background:#e1e1e1;"></div>
<div class="t" style="left:762.5px;width:200px;text-align:center;top:396.63px;font-size:12.6px;line-height:14px;color:#000;">Up</div>
<div class="a" style="left:812px;top:424px;width:101px;height:26px;border:1px solid #adadad;background:#e1e1e1;"></div>
<div class="t" style="left:762.5px;width:200px;text-align:center;top:430.63px;font-size:12.6px;line-height:14px;color:#000;">Down</div>
<div class="a" style="left:812px;top:458px;width:101px;height:26px;border:1px solid #adadad;background:#e1e1e1;"></div>
<div class="t" style="left:762.5px;width:200px;text-align:center;top:464.63px;font-size:12.6px;line-height:14px;color:#000;">Auto Stops</div>
<div class="a" style="left:811px;top:494px;width:16px;height:16px;border:1px solid #333;background:#fff;"></div>
<svg class="a" style="left:811px;top:494px" width="16" height="16" viewBox="0 0 16 16"><path d="M3.2 8.2L6.3 11.2L12.8 4.6" stroke="#333" stroke-width="1.1" fill="none"/></svg>
<div class="t" style="left:833.2px;top:495.10px;font-size:13px;line-height:15px;color:#222;">Edit Route</div>
<div class="a" style="left:811px;top:520px;width:16px;height:16px;border:1px solid #333;background:#fff;"></div>
<svg class="a" style="left:811px;top:520px" width="16" height="16" viewBox="0 0 16 16"><path d="M3.2 8.2L6.3 11.2L12.8 4.6" stroke="#333" stroke-width="1.1" fill="none"/></svg>
<div class="t" style="left:833.2px;top:521.10px;font-size:13px;line-height:15px;color:#222;">Auto Connect</div>
<div class="a" style="left:811px;top:546px;width:16px;height:16px;border:1px solid #333;background:#fff;"></div>
<div class="t" style="left:833.2px;top:547.10px;font-size:13px;line-height:15px;color:#222;">Auto Pan</div>
<div class="a" style="left:645px;top:633px;width:278px;height:62px;border:1px solid #828790;background:#fff;"></div>
<div class="a" style="left:783px;top:634px;width:1px;height:30px;background:#e5e5e5;"></div>
<div class="a" style="left:921px;top:634px;width:1px;height:30px;background:#e5e5e5;"></div>
<div class="t" style="left:614.5px;width:200px;text-align:center;top:640.90px;font-size:15px;line-height:17px;color:#111;">Stops</div>
<div class="t" style="left:752.6px;width:200px;text-align:center;top:640.90px;font-size:15px;line-height:17px;color:#111;">Sections</div>
<div class="t" style="left:649.3px;top:671.61px;font-size:14.7px;line-height:17px;color:#222;">2111: CampnNou1</div>
<div class="t" style="left:786.8px;top:671.61px;font-size:14.7px;line-height:17px;color:#222;">2336</div>
<div class="a" style="left:407px;top:746px;width:525px;height:86px;border:1px solid #828790;background:#fff;"></div>
<div class="a" style="left:582px;top:747px;width:1px;height:29px;background:#e5e5e5;"></div>
<div class="a" style="left:756px;top:747px;width:1px;height:29px;background:#e5e5e5;"></div>
<div class="a" style="left:930px;top:747px;width:1px;height:29px;background:#e5e5e5;"></div>
<div class="t" style="left:395.6px;width:200px;text-align:center;top:754.30px;font-size:15px;line-height:17px;color:#111;">Stop</div>
<div class="t" style="left:569.5px;width:200px;text-align:center;top:754.30px;font-size:15px;line-height:17px;color:#111;">Mean (s)</div>
<div class="t" style="left:744.1px;width:200px;text-align:center;top:754.30px;font-size:15px;line-height:17px;color:#111;">Offset (s)</div>
<div class="a" style="left:836px;top:841px;width:95px;height:25px;border:1px solid #adadad;background:#e1e1e1;"></div>
<div class="t" style="left:783.5px;width:200px;text-align:center;top:845.32px;font-size:13.5px;line-height:16px;color:#000;">Set All Times...</div>
<div class="a" style="left:387px;top:897px;width:91px;height:26px;border:1px solid #adadad;background:#e1e1e1;"></div>
<div class="t" style="left:332.5px;width:200px;text-align:center;top:903.63px;font-size:12.6px;line-height:14px;color:#000;">Help</div>
<div class="a" style="left:764px;top:897px;width:91px;height:26px;border:1px solid #adadad;background:#e1e1e1;"></div>
<div class="t" style="left:709.5px;width:200px;text-align:center;top:903.63px;font-size:12.6px;line-height:14px;color:#000;">OK</div>
<div class="a" style="left:864px;top:897px;width:89px;height:26px;border:1px solid #adadad;background:#e1e1e1;"></div>
<div class="t" style="left:808.5px;width:200px;text-align:center;top:903.63px;font-size:12.6px;line-height:14px;color:#000;">Cancel</div>
</body></html>
